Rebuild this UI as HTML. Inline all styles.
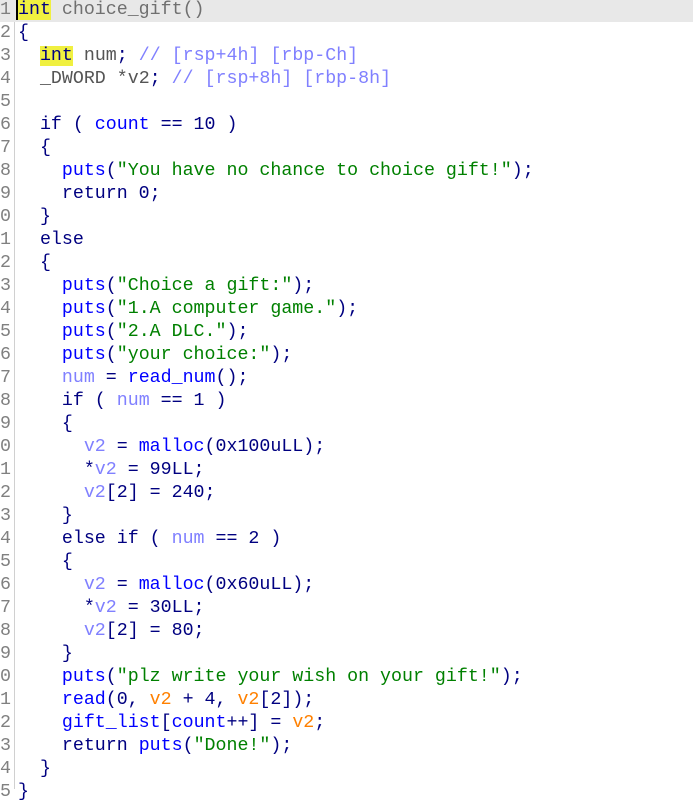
<!DOCTYPE html>
<html><head><meta charset="utf-8"><style>
body{margin:0;width:693px;height:789px;overflow:hidden;background:#fff;font-family:"Liberation Mono",monospace;font-size:18.3px;}
.wrap{position:absolute;top:-1px;left:0;right:0}
.l{height:23px;line-height:23px;white-space:pre;position:relative}
.n{position:absolute;left:0;width:11px;color:#808080;text-align:right;overflow:hidden;direction:rtl}
.c{position:absolute;left:18px;color:#000080}
.gut{position:absolute;left:14px;top:0;width:1px;height:789px;background:#d0d0d0}
.s{color:#008000}.f{color:#0000ff}.v{color:#8080ff}.o{color:#ff8000}.cm{color:#8080ff}
.hl{background:#e8e8e8}
.y{background:#f0f040}
.cur{border-left:2px solid #000;margin-left:-2px}
</style></head><body>
<div class="gut"></div>
<div class="wrap">
<div class="l hl"><span class="n">1</span><span class="c"><span class="y cur">int</span><span style="color:#707070"> choice_gift()</span></span></div>
<div class="l"><span class="n">2</span><span class="c">{</span></div>
<div class="l"><span class="n">3</span><span class="c">  <span class="y">int</span> <span style="color:#555">num</span>; <span class="cm">// [rsp+4h] [rbp-Ch]</span></span></div>
<div class="l"><span class="n">4</span><span class="c">  <span style="color:#555">_DWORD *v2</span>; <span class="cm">// [rsp+8h] [rbp-8h]</span></span></div>
<div class="l"><span class="n">5</span><span class="c"></span></div>
<div class="l"><span class="n">6</span><span class="c">  if ( <span class="f">count</span> == 10 )</span></div>
<div class="l"><span class="n">7</span><span class="c">  {</span></div>
<div class="l"><span class="n">8</span><span class="c">    <span class="f">puts</span>(<span class="s">"You have no chance to choice gift!"</span>);</span></div>
<div class="l"><span class="n">9</span><span class="c">    return 0;</span></div>
<div class="l"><span class="n">0</span><span class="c">  }</span></div>
<div class="l"><span class="n">1</span><span class="c">  else</span></div>
<div class="l"><span class="n">2</span><span class="c">  {</span></div>
<div class="l"><span class="n">3</span><span class="c">    <span class="f">puts</span>(<span class="s">"Choice a gift:"</span>);</span></div>
<div class="l"><span class="n">4</span><span class="c">    <span class="f">puts</span>(<span class="s">"1.A computer game."</span>);</span></div>
<div class="l"><span class="n">5</span><span class="c">    <span class="f">puts</span>(<span class="s">"2.A DLC."</span>);</span></div>
<div class="l"><span class="n">6</span><span class="c">    <span class="f">puts</span>(<span class="s">"your choice:"</span>);</span></div>
<div class="l"><span class="n">7</span><span class="c">    <span class="v">num</span> = <span class="f">read_num</span>();</span></div>
<div class="l"><span class="n">8</span><span class="c">    if ( <span class="v">num</span> == 1 )</span></div>
<div class="l"><span class="n">9</span><span class="c">    {</span></div>
<div class="l"><span class="n">0</span><span class="c">      <span class="v">v2</span> = <span class="f">malloc</span>(0x100uLL);</span></div>
<div class="l"><span class="n">1</span><span class="c">      *<span class="v">v2</span> = 99LL;</span></div>
<div class="l"><span class="n">2</span><span class="c">      <span class="v">v2</span>[2] = 240;</span></div>
<div class="l"><span class="n">3</span><span class="c">    }</span></div>
<div class="l"><span class="n">4</span><span class="c">    else if ( <span class="v">num</span> == 2 )</span></div>
<div class="l"><span class="n">5</span><span class="c">    {</span></div>
<div class="l"><span class="n">6</span><span class="c">      <span class="v">v2</span> = <span class="f">malloc</span>(0x60uLL);</span></div>
<div class="l"><span class="n">7</span><span class="c">      *<span class="v">v2</span> = 30LL;</span></div>
<div class="l"><span class="n">8</span><span class="c">      <span class="v">v2</span>[2] = 80;</span></div>
<div class="l"><span class="n">9</span><span class="c">    }</span></div>
<div class="l"><span class="n">0</span><span class="c">    <span class="f">puts</span>(<span class="s">"plz write your wish on your gift!"</span>);</span></div>
<div class="l"><span class="n">1</span><span class="c">    <span class="f">read</span>(0, <span class="o">v2</span> + 4, <span class="o">v2</span>[2]);</span></div>
<div class="l"><span class="n">2</span><span class="c">    <span class="f">gift_list</span>[<span class="f">count</span>++] = <span class="o">v2</span>;</span></div>
<div class="l"><span class="n">3</span><span class="c">    return <span class="f">puts</span>(<span class="s">"Done!"</span>);</span></div>
<div class="l"><span class="n">4</span><span class="c">  }</span></div>
<div class="l"><span class="n">5</span><span class="c">}</span></div>
</div>
</body></html>
